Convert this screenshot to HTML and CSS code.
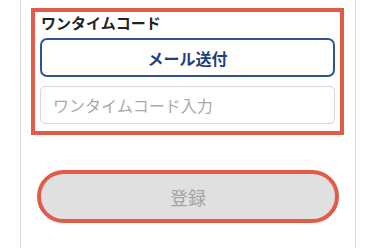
FILE: index.html
```html
<!DOCTYPE html>
<html lang="ja">
<head>
<meta charset="utf-8">
<link rel="stylesheet" href="styles.css">
</head>
<body>
<div class="card">
  <div class="otp-box">
    <div class="otp-label">ワンタイムコード</div>
    <button class="mail-btn" type="button">メール送付</button>
    <input class="otp-input" type="text" placeholder="ワンタイムコード入力">
  </div>
  <button class="submit-btn" type="button" disabled>登録</button>
</div>
</body>
</html>
```
FILE: styles.css
```css
html, body {
  margin: 0;
  padding: 0;
  background: #ffffff;
  font-family: "Noto Sans CJK JP", "Noto Sans", sans-serif;
}
.card {
  margin: 0 19px 0 20px;
  height: 248px;
  border-left: 1px solid #dcdcdc;
  border-right: 1px solid #dcdcdc;
  padding: 8px 11px 0 10px;
  box-sizing: border-box;
  display: flex;
  flex-direction: column;
}
.otp-box {
  border: 4px solid #e05c48;
  padding: 0 5px 7px 5px;
  display: flex;
  flex-direction: column;
}
.otp-label {
  font-size: 15px;
  font-weight: 700;
  line-height: 22px;
  color: #222;
  margin-bottom: 4px;
  padding-left: 1px;
}
.mail-btn {
  height: 39px;
  border: 2px solid #2c5596;
  border-radius: 7px;
  background: #fff;
  color: #1f3f80;
  font-family: inherit;
  font-size: 16px;
  font-weight: 700;
  padding: 0;
}
.otp-input {
  margin-top: 9px;
  height: 38px;
  box-sizing: border-box;
  border: 1px solid #d6d6d6;
  border-radius: 5px;
  padding: 0 12px;
  font-family: inherit;
  font-size: 16px;
  color: #333;
  outline: none;
}
.otp-input::placeholder {
  color: #a9a9a9;
}
.submit-btn {
  margin: 35px 5px 0 6px;
  height: 53px;
  border: 4px solid #e05c48;
  border-radius: 27px;
  background: #e0e0e0;
  color: #a4a4a4;
  font-family: inherit;
  font-size: 18px;
  padding: 0;
}
```
